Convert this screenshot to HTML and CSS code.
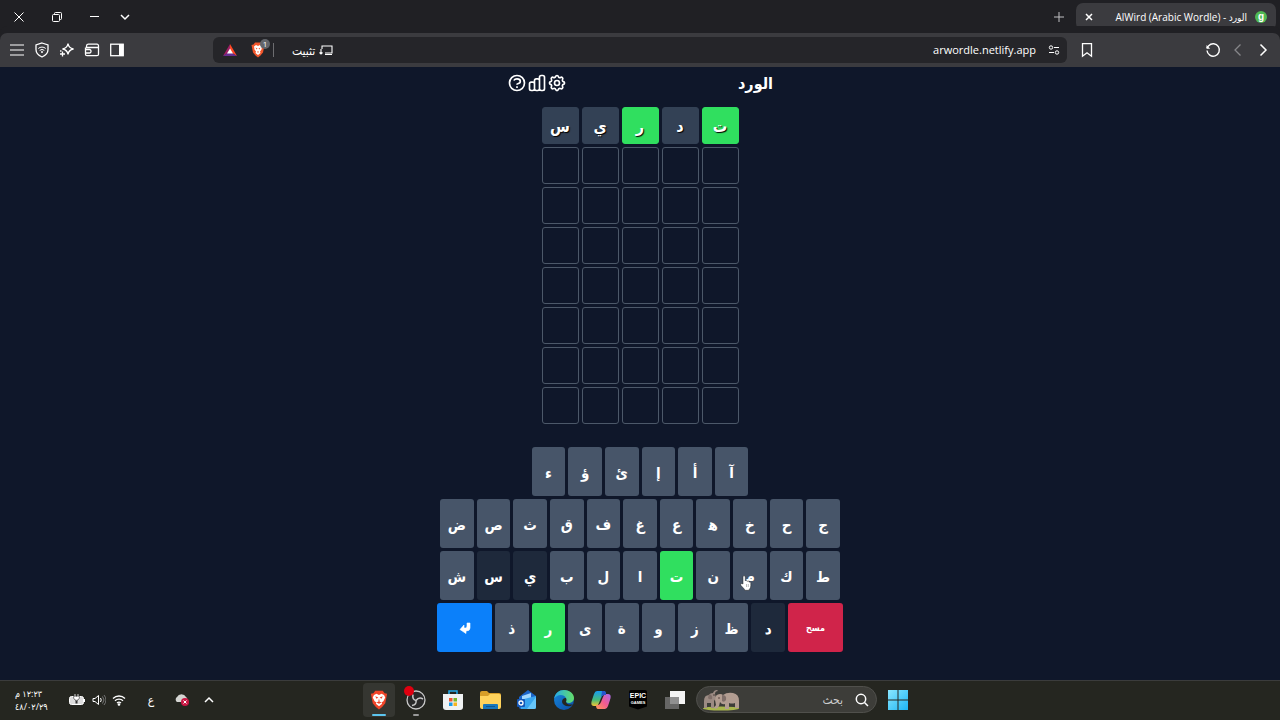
FILE: index.html
```html
<!DOCTYPE html>
<html lang="ar" dir="rtl">
<head>
  <meta charset="UTF-8">
  <meta name="viewport" content="width=device-width, initial-scale=1.0">
  <title>الورد - AlWird (Arabic Wordle)</title>
  <link rel="stylesheet" href="styles.css">
</head>
<body>
  <!-- Tabs -->
  <div class="tab-bar">
    <div class="tab">
      <span class="favicon">g</span>
      <span class="tab-title">الورد - AlWird (Arabic Wordle)</span>
      <button class="icon-btn" aria-label="Close tab"><svg width="8" height="8" viewBox="0 0 8 8"><path d="M1 1l6 6M7 1L1 7" stroke-width="1.5"/></svg></button>
    </div>
    <button class="icon-btn new-tab" aria-label="New tab"><svg width="10" height="10" viewBox="0 0 10 10"><path d="M5 0v10M0 5h10"/></svg></button>
    <div class="window-controls">
      <button class="icon-btn" aria-label="Search tabs"><svg width="10" height="10" viewBox="0 0 10 10"><path d="M1 3l4 4 4-4" stroke-width="1.5"/></svg></button>
      <button class="icon-btn" aria-label="Minimize"><svg width="10" height="10" viewBox="0 0 10 10"><path d="M0 4.500h9"/></svg></button>
      <button class="icon-btn restore" aria-label="Restore"><svg width="10" height="10" viewBox="0 0 10 10"><rect x=".5" y="2.500" width="7" height="7" rx="1"/><path d="M2.500 2V1.500a1 1 0 0 1 1-1h5a1 1 0 0 1 1 1v5a1 1 0 0 1-1 1H8"/></svg></button>
      <button class="icon-btn" aria-label="Close"><svg width="10" height="10" viewBox="0 0 10 10"><path d="M.5.5l9 9M9.500.5l-9 9"/></svg></button>
    </div>
  </div>

  <!-- Toolbar -->
  <div class="toolbar">
    <div class="nav-buttons">
      <button class="icon-btn" aria-label="Back"><svg width="16" height="16" viewBox="0 0 16 16"><path d="M5.500 2.500L11 8l-5.500 5.500" stroke-width="1.500"/></svg></button>
      <button class="icon-btn dim" aria-label="Forward"><svg width="16" height="16" viewBox="0 0 16 16"><path d="M10.500 2.500L5 8l5.500 5.500" stroke-width="1.300"/></svg></button>
      <button class="icon-btn" aria-label="Reload"><svg width="16" height="16" viewBox="0 0 16 16"><path d="M2 8.500a6.200 6.200 0 1 0 1.700-4.800L1.800 6.200" stroke-width="1.400"/><path d="M1.500 3v3.700h3.700z" fill="currentColor" stroke="none"/></svg></button>
    </div>
    <button class="icon-btn" aria-label="Bookmark"><svg width="16" height="16" viewBox="0 0 16 16"><path d="M3.500 1.700h9v12.500L8 10.700l-4.500 3.500z" stroke-width="1.300"/></svg></button>
    <div class="address-bar">
      <button class="icon-btn" aria-label="Site settings"><svg width="12" height="12" viewBox="0 0 12 12"><circle cx="3" cy="3.500" r="1.700"/><path d="M6 3.500h5M1 8.500h5"/><circle cx="9" cy="8.500" r="1.700"/></svg></button>
      <input class="url" type="text" dir="ltr" aria-label="Address" value="arwordle.netlify.app">
      <button class="install"><svg width="14" height="12" viewBox="0 0 14 12"><path d="M3 5V2h10v7H6M6 10.500h7M2 5v5M.5 8.500L2 10l1.500-1.500" stroke-width="1.100"/></svg> تثبيت</button>
      <span class="divider"></span>
      <button class="icon-btn shield" aria-label="Brave Shields">
        <svg width="14" height="16" viewBox="0 0 28 32"><path d="M8 1h12l3 4 4 1-1 5-2 10-5 6-5 4-5-4-5-6L2 11 1 6l4-1z" fill="#f1562b" stroke="none"/><path d="M6 9l4-3 4 2 4-2 4 3-1 6-3 4 1 3-5 4-5-4 1-3-3-4z" fill="#fff" stroke="none"/><path d="M9 11l4 2-2 2zM19 11l-4 2 2 2zM12 19h4l-2 3z" fill="#f1562b" stroke="none"/></svg>
        <span class="count">1</span>
      </button>
      <button class="icon-btn" aria-label="Brave Rewards"><svg width="14" height="12" viewBox="0 0 14 12"><g stroke="none"><path d="M7 0L0 12l7-4z" fill="#9e1f63"/><path d="M7 0l7 12-7-4z" fill="#ff4724"/><path d="M0 12h14L7 7.500z" fill="#662d91"/><path d="M7 4.500L10 9.500H4z" fill="#fff"/></g></svg></button>
    </div>
    <div class="side-buttons">
      <button class="icon-btn" aria-label="Sidebar"><svg width="16" height="16" viewBox="0 0 16 16"><rect x="1.700" y="2.200" width="12.500" height="11.500" stroke-width="1.300"/><path d="M10 2h4.500v12H10z" fill="currentColor" stroke="none"/></svg></button>
      <button class="icon-btn" aria-label="Wallet"><svg width="16" height="16" viewBox="0 0 16 16"><path d="M1.500 5.500v6.700a1.500 1.500 0 0 0 1.500 1.500h10a1.500 1.500 0 0 0 1.500-1.500V3.700A1.500 1.500 0 0 0 13 2.200H4.500A2 2 0 0 0 2.500 4v1.500h12M1.500 7.500h4a1.500 1.500 0 0 1 1.500 1.500v.5A1.500 1.500 0 0 1 5.500 11h-4" stroke-width="1.300"/></svg></button>
      <button class="icon-btn" aria-label="Leo AI"><svg width="16" height="16" viewBox="0 0 16 16"><path d="M9 1.500q.6 4.600 5.500 5.500-4.900.9-5.500 5.500Q8.400 7.900 3.500 7 8.400 6.100 9 1.500z" stroke-width="1.300"/><path d="M3.500 9.500v5M1 12h5" stroke-width="1.300"/><circle cx="1.800" cy="9" r=".5"/></svg></button>
      <button class="icon-btn" aria-label="VPN"><svg width="16" height="16" viewBox="0 0 16 16"><path d="M8 1l6 2v4.500c0 3.500-2.500 6-6 7.500-3.500-1.500-6-4-6-7.500V3z" stroke-width="1.300"/><path d="M4.300 6.500a5.500 5.500 0 0 1 7.400 0M5.700 8.400a3.500 3.500 0 0 1 4.600 0"/><circle cx="8" cy="10" r=".6" fill="currentColor"/></svg></button>
      <button class="icon-btn" aria-label="Menu"><svg width="16" height="16" viewBox="0 0 16 16"><path d="M1 3h14M1 8h14M1 13h14" stroke-width="1.200"/></svg></button>
    </div>
  </div>

  <!-- Game -->
  <main class="game">
    <header class="game-header">
      <h1>الورد</h1>
      <div class="header-icons">
        <button class="icon-btn" aria-label="الإعدادات"><svg width="20" height="20" viewBox="0 0 24 24"><path d="M10.300 4.300c.4-1.800 3-1.800 3.400 0a1.700 1.700 0 0 0 2.600 1.100c1.500-1 3.300.8 2.400 2.300a1.700 1.700 0 0 0 1 2.600c1.800.4 1.800 3 0 3.400a1.700 1.700 0 0 0-1 2.600c.9 1.500-.9 3.300-2.400 2.400a1.700 1.700 0 0 0-2.600 1c-.4 1.800-3 1.800-3.400 0a1.700 1.700 0 0 0-2.600-1c-1.500.9-3.300-.9-2.400-2.400a1.700 1.700 0 0 0-1-2.600c-1.800-.4-1.800-3 0-3.400a1.700 1.700 0 0 0 1-2.600c-.9-1.500.9-3.300 2.400-2.300 1 .6 2.300 0 2.600-1.100z"/><circle cx="12" cy="12" r="3"/></svg></button>
        <button class="icon-btn" aria-label="الإحصائيات"><svg width="20" height="20" viewBox="0 0 24 24"><path d="M9 19v-6a2 2 0 0 0-2-2H5a2 2 0 0 0-2 2v6a2 2 0 0 0 2 2h2a2 2 0 0 0 2-2zm0 0V9a2 2 0 0 1 2-2h2a2 2 0 0 1 2 2v10m-6 0a2 2 0 0 0 2 2h2a2 2 0 0 0 2-2m0 0V5a2 2 0 0 1 2-2h2a2 2 0 0 1 2 2v14a2 2 0 0 1-2 2h-2a2 2 0 0 1-2-2z"/></svg></button>
        <button class="icon-btn" aria-label="المساعدة"><svg width="20" height="20" viewBox="0 0 24 24"><circle cx="12" cy="12" r="9"/><path d="M8.200 9c.6-1.200 2.100-2 3.800-2 2.200 0 4 1.300 4 3 0 1.400-1.300 2.600-3 2.900-.5.100-1 .5-1 1.100"/><path d="M12 16v2"/></svg></button>
      </div>
    </header>

    <div class="board" id="board"></div>
    <div class="keyboard" id="keyboard"></div>
  </main>

  <!-- Taskbar -->
  <footer class="taskbar">
    <div class="apps">
      <button class="app" aria-label="Start"><svg width="20" height="20" viewBox="0 0 20 20"><defs><linearGradient id="win" x1="0" y1="0" x2="1" y2="1"><stop offset="0" stop-color="#8be7ff"/><stop offset="1" stop-color="#1cb5f5"/></linearGradient></defs><path d="M0 0h9.500v9.500H0zM10.500 0H20v9.500h-9.500zM0 10.500h9.500V20H0zM10.500 10.500H20V20h-9.500z" fill="url(#win)"/></svg></button>
      <label class="search">
        <svg width="14" height="14" viewBox="0 0 14 14" fill="none" stroke="#fff" stroke-width="1.500"><circle cx="6" cy="6" r="4.700"/><path d="M9.500 9.500L13 13"/></svg>
        <input type="text" placeholder="بحث" aria-label="بحث">
        <svg width="38" height="22" viewBox="0 0 38 22"><ellipse cx="19" cy="19.500" rx="18" ry="2" fill="#a9b64e"/><path d="M2 19V12q0-6 5-6 1-2 4-2 1-3 4-3l1 1q-3 0-3 3l1 4-2 3v7H9v-5H5v5z" fill="#9c8b83"/><path d="M13 11q0-6 5-6 2 0 3 1 4-3 10-2 6 1 6 8v7h-4v-5q-3 1-6 0v6h-4v-5q-3 1-5-2l-1 4q-2 4-5 2l2-3z" fill="#b29d91"/><path d="M20 6q5 0 4 5-2 3-4 1zM7 5q4 1 3 5-3 1-4-1z" fill="#806f69"/><circle cx="17" cy="9" r=".7" fill="#322"/><circle cx="12" cy="6" r=".7" fill="#322"/></svg>
      </label>
      <button class="app" aria-label="Task view"><svg width="20" height="20" viewBox="0 0 20 20"><path d="M5 1h15v13H5z" fill="#f4f4f4"/><path d="M0 7h14v12H0z" fill="#777" opacity=".8"/></svg></button>
      <button class="app epic" aria-label="Epic Games"><span>EPIC</span><small>GAMES</small></button>
      <button class="app" aria-label="Copilot"><svg width="20" height="20" viewBox="0 0 20 20"><defs><linearGradient id="cop1" x1="0" y1="0" x2="0" y2="1"><stop offset="0" stop-color="#169bf3"/><stop offset=".6" stop-color="#48bc76"/><stop offset="1" stop-color="#f5c532"/></linearGradient><linearGradient id="cop2" x1="1" y1="0" x2="0" y2="1"><stop offset="0" stop-color="#a76bec"/><stop offset=".5" stop-color="#f25a91"/><stop offset="1" stop-color="#ff9a54"/></linearGradient></defs><path d="M6 1h7q2 0 2 4h-2q-2 0-3 3l-2 5q-1 3-3 3H3q-4 0-2-6l2-6q1-3 3-3z" fill="url(#cop1)"/><path d="M14 19H7q-2 0-2-4h2q2 0 3-3l2-5q1-3 3-3h2q4 0 2 6l-2 6q-1 3-3 3z" fill="url(#cop2)"/><path d="M11 1h2q2 0 2 4h-2q-2 0-3 3z" fill="#2854cc"/></svg></button>
      <button class="app" aria-label="Edge"><svg width="20" height="20" viewBox="0 0 20 20"><defs><linearGradient id="edge1" x1="0" y1="0" x2="1" y2="0"><stop offset="0" stop-color="#24a8ec"/><stop offset="1" stop-color="#65df68"/></linearGradient><linearGradient id="edge2" x1="0" y1="0" x2="1" y2="1"><stop offset="0" stop-color="#1688dc"/><stop offset="1" stop-color="#0c4ca4"/></linearGradient></defs><circle cx="10" cy="10" r="10" fill="url(#edge2)"/><path d="M0 9C1 3 5 0 10 0c6 0 10 4 10 8 0 5-6 6-8 4-1-1 1-2 0-4C10 4 3 4 0 9z" fill="url(#edge1)"/><path d="M12 8q1 2 0 4c1 3 5 3 7 2l-2 2q-8 1-9-4 0-4 4-4z" fill="#252620"/></svg></button>
      <button class="app" aria-label="Mail"><svg width="20" height="20" viewBox="0 0 20 20"><path d="M2 7L11 0l8 6v11q0 2-2 2H4q-2 0-2-2z" fill="#1b65c9"/><path d="M5 6l9-3v8H5z" fill="#a1d8ff"/><path d="M3 10l16-4v11q0 2-2 2H4z" fill="#38a5ef"/><path d="M19 7v10q0 2-2 2h-7z" fill="#67c6fa"/><rect y="9" width="8" height="8" rx="1" fill="#1457b7"/><circle cx="4" cy="13" r="2" fill="none" stroke="#fff" stroke-width="1.300"/></svg></button>
      <button class="app" aria-label="File Explorer"><svg width="21" height="20" viewBox="0 0 21 20"><path d="M0 3q0-2 2-2h5l2 2h10q2 0 2 2v4H0z" fill="#d79e28"/><path d="M0 6h8l2-2h9q2 0 2 2v11q0 2-2 2H2q-2 0-2-2z" fill="#ffd35c"/><path d="M3 19v-4q0-1 1-1h13q1 0 1 1v4z" fill="#1877bb"/><path d="M6 16h9v1H6z" fill="#0e568f"/></svg></button>
      <button class="app" aria-label="Microsoft Store"><svg width="20" height="20" viewBox="0 0 20 20"><path d="M6 5V1h8v4" fill="none" stroke="#25a9e8" stroke-width="1.500"/><path d="M0 4h20v13q0 3-3 3H3q-3 0-3-3z" fill="#f0f2f3"/><path d="M6 8h3.500v3.500H6z" fill="#ed5532"/><path d="M10.500 8H14v3.500h-3.500z" fill="#77b72b"/><path d="M6 12.500h3.500V16H6z" fill="#1a9be8"/><path d="M10.500 12.500H14V16h-3.500z" fill="#f6b51e"/></svg></button>
      <button class="app open" aria-label="OBS Studio"><svg width="20" height="20" viewBox="0 0 20 20"><circle cx="10" cy="10" r="9" fill="#292929" stroke="#c9c9c9" stroke-width="1.300"/><path d="M10 10.500Q6 9.500 7 4.500M10 10.500q3-4 7-1.500M10 10.500q1 4-4 5" fill="none" stroke="#c9c9c9" stroke-width="1.500"/></svg><span class="recording"></span></button>
      <button class="app open active" aria-label="Brave"><svg width="18" height="20" viewBox="0 0 28 32"><path d="M8 1h12l3 4 4 1-1 5-2 10-5 6-5 4-5-4-5-6L2 11 1 6l4-1z" fill="#f0452a"/><path d="M6 8l4-2 4 2 4-2 4 2 2 4-3 6-3 2 1 2-5 4-5-4 1-2-3-2-3-6z" fill="#fff"/><path d="M8 10l5 2-3 2zM20 10l-5 2 3 2zM14 13l1 5h-2zM10 20l4-2 4 2-4 2z" fill="#f0452a"/></svg></button>
    </div>
    <div class="tray">
      <svg class="tray-chevron" width="10" height="8" viewBox="0 0 10 8" fill="none" stroke="#fff" stroke-width="1.500"><path d="M1 6l4-4 4 4"/></svg>
      <svg class="cloud" width="16" height="14" viewBox="0 0 16 14"><path d="M3 9a3 3 0 0 1 0-5 5 5 0 0 1 9 0 3 3 0 0 1 0 5z" fill="#d5d5d2"/><circle cx="11" cy="9" r="4" fill="#c91744"/><path d="M9.500 7.500l3 3m0-3l-3 3" stroke="#fff"/></svg>
      <span class="lang">ع</span>
      <div class="status">
        <svg width="14" height="12" viewBox="0 0 14 12" fill="none" stroke="#fff" stroke-width="1.300"><path d="M1 4.500a8.500 8.500 0 0 1 12 0M3 6.800a5.700 5.700 0 0 1 8 0M5 9a3 3 0 0 1 4 0"/><circle cx="7" cy="10.500" r=".7" fill="#fff"/></svg>
        <svg width="14" height="12" viewBox="0 0 14 12" fill="none" stroke="#fff"><path d="M1 4.500h2L6.500 1.500v9L3 7.500H1zM8.500 4q1.500 2 0 4"/><path d="M10.500 2.500q3 3.500 0 7M12 1q4 5 0 10" stroke="#777"/></svg>
        <svg width="18" height="14" viewBox="0 0 18 14"><rect x="1.500" y="3.500" width="14" height="8" rx="2" fill="#ddd" stroke="#fff"/><path d="M16.500 6v3" stroke="#fff"/><path d="M5.500 2.500h6v3l-2 2v3h-2v-3l-2-2z" fill="#333"/><path d="M7 1v3M10 1v3M6.500 4h4v1.500l-2 1.500-2-1.500z" fill="#fff" stroke="#fff" stroke-width=".8"/></svg>
      </div>
      <div class="clock"><span>١٢:٢٣ م</span><span dir="ltr">٤٨/٠٢/٢٩</span></div>
    </div>
  </footer>

  <svg class="cursor" width="12" height="16" viewBox="0 0 12 16"><path d="M3 9V2q0-1.500 1-1.500T5.300 2v4q.3-.8 1.200-.5.7.3.7 1 .4-.7 1.200-.4.7.3.7 1.100.5-.5 1.200-.1.500.4.500 1.200v2.500q0 2.500-1.500 3.500v1H4.500v-1L1 10.500Q.3 9.300 1 8.700 2 8.200 3 9z" fill="#fff" stroke="#222" stroke-width=".5"/><path d="M6.500 9v3M8.300 9v3" stroke="#777" stroke-width=".5"/></svg>

  <script src="script.js"></script>
</body>
</html>
```
FILE: styles.css
```css
* {
  box-sizing: border-box;
}
body {
  display: flex;
  flex-direction: column;
  min-height: 100vh;
  margin: 0;
  background-color: #0f172a;
  color: #fff;
  font-family: "Open Sans", "DejaVu Sans Condensed", "DejaVu Sans", sans-serif;
}
button, input {
  font-family: inherit;
  color: inherit;
}
button {
  padding: 0;
  border: none;
  background: none;
  cursor: pointer;
}
svg {
  display: block;
  flex: none;
}
.icon-btn {
  display: flex;
  align-items: center;
  justify-content: center;
  flex: none;
}
.icon-btn svg {
  fill: none;
  stroke: currentColor;
}

/* Tabs */
.tab-bar {
  display: flex;
  align-items: center;
  height: 33px;
  padding: 0 4px 0 14px;
  background-color: #202024;
}
.tab {
  display: flex;
  align-items: center;
  gap: 8px;
  width: 200px;
  height: 27px;
  padding: 0 9px;
  border-radius: 7px;
  background-color: #3b3b3f;
  font-size: 10px;
}
.tab-title {
  flex: 1;
  white-space: nowrap;
}
.favicon {
  width: 12px;
  height: 12px;
  border-radius: 50%;
  background-color: #4fb953;
  font-family: "Liberation Sans", sans-serif;
  font-size: 10px;
  font-weight: bold;
  line-height: 11px;
  text-align: center;
}
.new-tab {
  margin-right: 12px;
  color: #c0c0c3;
}
.window-controls {
  display: flex;
  align-items: center;
  gap: 20px;
  margin-right: auto;
}
.window-controls .restore {
  margin: 0 8px;
}

/* Toolbar */
.toolbar {
  display: flex;
  align-items: center;
  gap: 12px;
  height: 34px;
  padding: 0 9px;
  border-radius: 7px 7px 0 0;
  background-color: #3b3b3f;
  box-shadow: 0 -7px 0 #202024;
}
.nav-buttons, .side-buttons {
  display: flex;
  gap: 9px;
}
.nav-buttons {
  width: 164px;
}
.side-buttons {
  width: 192px;
  justify-content: flex-end;
}
.dim {
  color: #86868a;
}
.address-bar {
  display: flex;
  align-items: center;
  flex: 1;
  height: 26px;
  padding: 0 7px 0 10px;
  border-radius: 6px;
  background-color: #252529;
}
.url {
  flex: 1;
  min-width: 0;
  margin: 0 12px;
  padding: 0 0 2px;
  border: none;
  outline: none;
  background: none;
  font-size: 11px;
  text-align: right;
}
.install {
  display: flex;
  align-items: center;
  gap: 4px;
  font-size: 12px;
}
.install svg {
  fill: none;
  stroke: currentColor;
}
.divider {
  width: 1px;
  height: 14px;
  margin: 0 18px 0 8px;
  background-color: #6d6d70;
}
.shield {
  position: relative;
  margin-left: 14px;
}
.count {
  position: absolute;
  top: -3px;
  right: -5px;
  width: 10px;
  height: 10px;
  border-radius: 50%;
  background-color: #62656b;
  font-size: 8px;
  line-height: 10px;
}

/* Game */
.game {
  display: flex;
  flex-direction: column;
  align-items: center;
  flex: 1;
  padding: 4px 0 28px;
}
.game-header {
  display: flex;
  align-items: center;
  justify-content: space-between;
  width: 100%;
  max-width: 266px;
  height: 24px;
  margin-bottom: 12px;
}
.game-header h1 {
  margin: 0;
  font-size: 16px;
}
.header-icons {
  display: flex;
}
.header-icons svg {
  stroke-width: 2;
}
.board {
  display: grid;
  grid-template-columns: repeat(5, 37px);
  gap: 3px;
  margin-bottom: 23px;
}
.cell {
  display: flex;
  align-items: center;
  justify-content: center;
  height: 37px;
  border: 1px solid #4c5869;
  border-radius: 3px;
  font-size: 16px;
  font-weight: bold;
  text-shadow: 1px 1px 1px #000;
}
.cell.absent {
  border-color: #334155;
  background-color: #334155;
}
.cell.correct {
  border-color: #30df5f;
  background-color: #30df5f;
}
.keyboard {
  display: flex;
  flex-direction: column;
  gap: 3px;
  width: 100%;
  max-width: 406px;
}
.key-row {
  display: flex;
  justify-content: center;
  gap: 3px;
}
.key {
  display: flex;
  align-items: center;
  justify-content: center;
  width: calc((100% - 36px) / 11);
  height: 49px;
  border-radius: 3px;
  background-color: #475569;
  font-size: 15px;
  font-weight: bold;
}
.key.correct {
  background-color: #30df5f;
}
.key.absent {
  background-color: #1e293b;
}
.key.enter, .key.delete {
  width: 55px;
}
.key.enter {
  background-color: #0b80fa;
}
.key.delete {
  background-color: #d0244a;
  font-size: 9px;
}
.cursor {
  position: absolute;
  top: 575px;
  left: 740px;
}

/* Taskbar */
.taskbar {
  display: flex;
  align-items: center;
  justify-content: space-between;
  height: 40px;
  padding: 0 366px 2px 15px;
  border-top: 1px solid #3b3c3c;
  background-color: #252620;
}
.apps {
  display: flex;
  align-items: center;
  gap: 5px;
}
.app {
  position: relative;
  display: flex;
  align-items: center;
  justify-content: center;
  width: 32px;
  height: 34px;
  border-radius: 4px;
}
.search {
  display: flex;
  align-items: center;
  gap: 12px;
  width: 181px;
  height: 27px;
  padding: 0 7px 0 5px;
  border: 1px solid #50504c;
  border-radius: 14px;
  background-color: #3d3d39;
}
.search input {
  flex: 1;
  min-width: 0;
  padding: 0;
  border: none;
  outline: none;
  background: none;
  font-size: 12px;
}
.search input::placeholder {
  color: #ccc;
}
.epic {
  flex-direction: column;
}
.epic span, .epic small {
  width: 18px;
  background-color: #000;
  font-family: "Liberation Sans", sans-serif;
  font-weight: bold;
}
.epic span {
  padding-top: 2px;
  border-radius: 2px 2px 0 0;
  font-size: 7px;
  line-height: 8px;
}
.epic small {
  height: 10px;
  font-size: 4px;
  line-height: 5px;
  clip-path: polygon(0 0, 100% 0, 100% 70%, 50% 100%, 0 70%);
}
.open::after {
  content: "";
  position: absolute;
  bottom: 1px;
  width: 6px;
  height: 2px;
  border-radius: 1px;
  background-color: #999;
}
.active {
  background-color: #353631;
}
.active::after {
  width: 14px;
  background-color: #5cc5ef;
}
.recording {
  position: absolute;
  top: 3px;
  left: 4px;
  width: 10px;
  height: 10px;
  border-radius: 50%;
  background-color: #e00010;
}
.tray {
  display: flex;
  align-items: center;
}
.tray-chevron {
  margin-left: 14px;
}
.cloud {
  margin-left: 20px;
}
.lang {
  margin-left: 22px;
  font-size: 12px;
}
.status {
  display: flex;
  align-items: center;
  gap: 6px;
  margin-left: 20px;
}
.clock {
  display: flex;
  flex-direction: column;
  font-size: 9px;
  line-height: 13px;
  text-align: left;
}
```
FILE: script.js
```js
const ROWS = 8;
const COLS = 5;
const guess = 'تدريس';
const guessStatus = ['correct', 'absent', 'correct', 'absent', 'absent'];

// the joiner after ه keeps it in its initial form
const keyRows = [
  ['آ', 'أ', 'إ', 'ئ', 'ؤ', 'ء'],
  ['ج', 'ح', 'خ', 'ه\u200d', 'ع', 'غ', 'ف', 'ق', 'ث', 'ص', 'ض'],
  ['ط', 'ك', 'م', 'ن', 'ت', 'ا', 'ل', 'ب', 'ي', 'س', 'ش'],
  ['delete', 'د', 'ظ', 'ز', 'و', 'ة', 'ى', 'ر', 'ذ', 'enter']
];

const enterIcon = '<svg width="12" height="12" viewBox="0 0 12 12"><path d="M8 1h3v5q0 3-4 3v2.500L1 7.500l4-4.500v3h1.500Q8 6 8 4z" fill="#fff" stroke="#fff" stroke-width=".6" stroke-linejoin="round"/></svg>';

const board = document.getElementById('board');
for (let i = 0; i < ROWS * COLS; i++) {
  const cell = document.createElement('div');
  cell.className = 'cell';
  if (i < COLS) {
    cell.classList.add(guessStatus[i]);
    cell.textContent = guess[i];
  }
  board.appendChild(cell);
}

const keyboard = document.getElementById('keyboard');
keyRows.forEach((letters) => {
  const row = document.createElement('div');
  row.className = 'key-row';
  letters.forEach((letter) => {
    const key = document.createElement('button');
    key.className = 'key';
    if (letter === 'enter') {
      key.classList.add('enter');
      key.setAttribute('aria-label', 'إدخال');
      key.innerHTML = enterIcon;
    } else if (letter === 'delete') {
      key.classList.add('delete');
      key.textContent = 'مسح';
    } else {
      const index = guess.indexOf(letter);
      if (index !== -1) key.classList.add(guessStatus[index]);
      key.textContent = letter;
    }
    row.appendChild(key);
  });
  keyboard.appendChild(row);
});
```
